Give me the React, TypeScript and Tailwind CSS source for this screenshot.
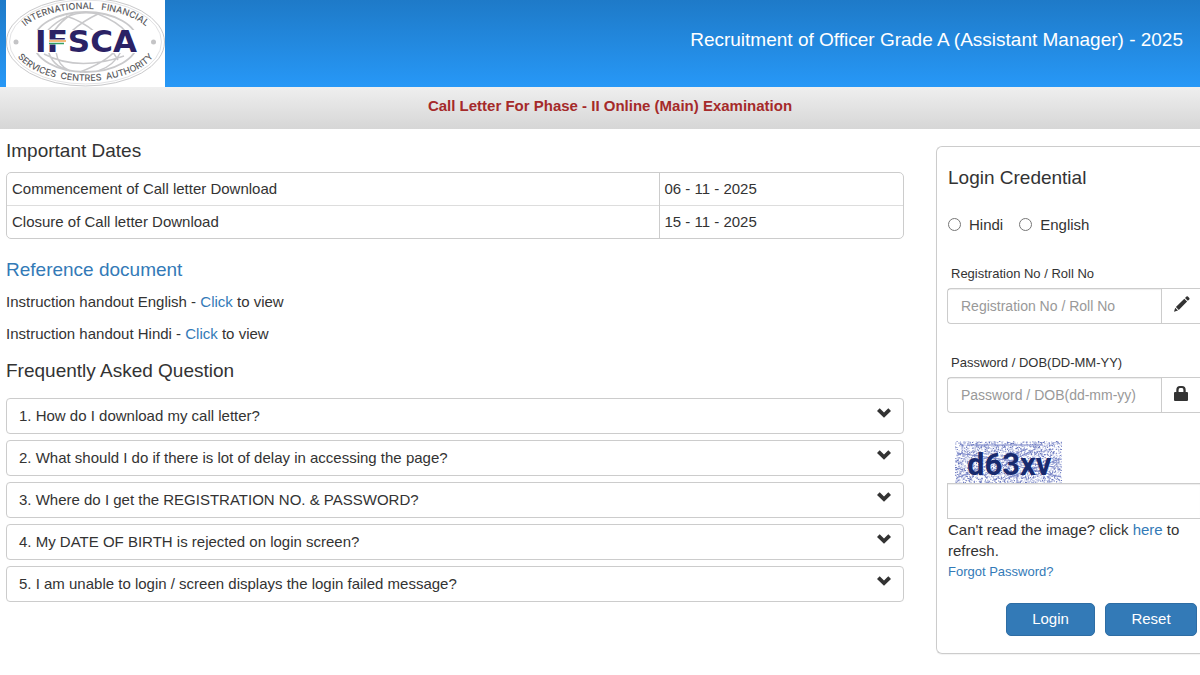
import { useState } from 'react';

const dates = [
  { label: 'Commencement of Call letter Download', date: '06 - 11 - 2025' },
  { label: 'Closure of Call letter Download', date: '15 - 11 - 2025' },
];

const questions = [
  '1. How do I download my call letter?',
  '2. What should I do if there is lot of delay in accessing the page?',
  '3. Where do I get the REGISTRATION NO. & PASSWORD?',
  '4. My DATE OF BIRTH is rejected on login screen?',
  '5. I am unable to login / screen displays the login failed message?',
];

const linkClass = 'text-[#337ab7] hover:underline';

function Logo() {
  return (
    <svg viewBox="0 0 159 87" className="ml-[6px] block h-[87px] w-[159px] bg-white" role="img" aria-label="IFSCA">
      <defs>
        <path id="ring-top" d="M 11 42 A 68.500 33 0 0 1 148 42" />
        <path id="ring-bottom" d="M 6 42 A 73.500 39 0 0 0 153 42" />
      </defs>
      <g fill="none" stroke="#c9c9cb">
        <ellipse cx="79.500" cy="42" rx="79" ry="44" strokeWidth="1" />
        <ellipse cx="79.500" cy="42" rx="76" ry="42" strokeWidth="1" stroke="#e2e2e4" />
        <ellipse cx="79.500" cy="42" rx="52" ry="30" strokeWidth="1.800" />
        <path d="M42 30 Q64 8 92 14 Q112 22 120 32 M66 14 Q44 28 42 50 Q46 66 62 70 M60 16 Q92 26 112 60 M92 14 Q62 28 50 52 Q52 66 64 71 M116 50 Q108 66 92 71 M38 54 Q72 72 118 56 M110 50 Q100 62 74 72" strokeWidth="1.500" />
      </g>
      <rect x="14" y="30" width="131" height="23" fill="#fff" />
      <circle cx="10" cy="42" r="2.500" fill="#c4c4c6" />
      <circle cx="147.500" cy="42" r="2.500" fill="#c4c4c6" />
      <text x="80" y="52" textAnchor="middle" fill="#2b2265" className="font-['DejaVu_Sans'] text-[31px] font-bold">IFSCA</text>
      <path d="M43 42 h17" stroke="#fff" strokeWidth="5" />
      <path d="M43 41 h17" stroke="#f0a04b" strokeWidth="1.500" />
      <path d="M43 43.500 h15" stroke="#35a065" strokeWidth="1.500" />
      <g fill="#5b5b60" textAnchor="middle" className="font-['Inter'] font-medium">
        <text className="text-[9px]"><textPath href="#ring-top" startOffset="50%">INTERNATIONAL{'\u00a0\u00a0'} FINANCIAL</textPath></text>
        <text className="text-[9px]"><textPath href="#ring-bottom" startOffset="50%">SERVICES{'\u00a0'} CENTRES{'\u00a0'} AUTHORITY</textPath></text>
      </g>
    </svg>
  );
}

// small seeded generator so the speckle stays the same between renders
function speckle(count: number, seed: number) {
  let s = seed;
  const next = () => {
    s = (s * 16807) % 2147483647;
    return s / 2147483647;
  };
  let d = '';
  for (let i = 0; i < count; i++) {
    const x = (next() * 106).toFixed(1);
    const y = (next() * 42).toFixed(1);
    d += `M${x} ${y}h1v1h-1z`;
  }
  return d;
}

const darkDots = speckle(1100, 77);
const lightDots = speckle(1300, 4021);

function Captcha() {
  return (
    <svg viewBox="0 0 107 42" className="ml-2 block h-[42px] w-[107px]" role="img" aria-label="Captcha image">
      <path d={lightDots} fill="#bcc3e6" />
      <path d={darkDots} fill="#6876bd" />
      <path d="M12 4 H88 M2 12 L100 26 M4 36 L72 8 M62 10 V42 M50 38 L105 18 M80 8 L30 34 M58 24 L106 36" stroke="#7a86c8" strokeWidth="1" fill="none" />
      <text x="12" y="34" fill="#182a6e" className="font-['Roboto'] text-[31px] font-bold">d63xv</text>
    </svg>
  );
}

function ChevronDown() {
  return (
    <svg viewBox="0 0 14 10" className="mb-1 h-[10px] w-[14px] shrink-0" aria-hidden="true">
      <path d="M0 3 L2.700 .3 L7 4.500 L11.300 .3 L14 3 L7 9.800 Z" fill="#333" />
    </svg>
  );
}

function Pencil() {
  return (
    <svg viewBox="0 0 16 16" className="h-4 w-4" aria-hidden="true">
      <path d="M0 15.800 L1.200 11.800 L4 14.600 Z M1.900 11 L10.300 2.700 L13.100 5.500 L4.800 13.900 Z M11 2 L12.500 .5 Q13.200 0 13.900 .6 L15.300 2 Q15.900 2.700 15.300 3.400 L13.800 4.800 Z" fill="#333" />
    </svg>
  );
}

function Padlock() {
  return (
    <svg viewBox="0 0 14 15" className="h-[15px] w-[14px]" aria-hidden="true">
      <path d="M0 7 Q0 6 1 6 H2.300 V4 Q2.300 0 6 0 H8 Q11.700 0 11.700 4 V6 H13 Q14 6 14 7 V14 Q14 15 13 15 H1 Q0 15 0 14 Z M4.600 6 H9.400 V4 Q9.400 2 8 2 H6 Q4.600 2 4.600 4 Z" fill="#333" fillRule="evenodd" />
    </svg>
  );
}

const inputClass =
  'min-w-0 flex-1 px-[13px] text-sm text-[#555] placeholder-[#999] shadow-[inset_0_1px_1px_rgba(0,0,0,0.075)] outline-none';

export default function App() {
  const [language, setLanguage] = useState('');
  const [open, setOpen] = useState(-1);

  return (
    <div className="min-h-screen overflow-hidden bg-white font-['Liberation_Sans',Arial,sans-serif] text-[15px] leading-[21px] text-[#333]">
      {/* Header */}
      <header className="flex items-start justify-between bg-linear-to-b from-[#1e7ac8] to-[#2798f7]">
        <Logo />
        <h1 className="pt-[27px] pr-[17px] text-[19px] leading-[26px] text-white">
          Recruitment of Officer Grade A (Assistant Manager) - 2025
        </h1>
      </header>
      <div className="h-[42px] bg-linear-to-b from-[#efefef] to-[#d6d6d6] pt-2 pl-5 text-center font-bold text-[#a52a2a]">
        Call Letter For Phase - II Online (Main) Examination
      </div>

      <div className="flex items-start">
        <main className="flex-1 pt-[10px] pr-8 pl-[6px]">
          <h2 className="text-[19px] leading-6">Important Dates</h2>
          <div className="mt-[9px] overflow-hidden rounded-[5px] border border-[#ccc]">
            <table className="w-full border-collapse leading-5">
              <tbody>
                {dates.map((d, i) => (
                  <tr key={d.label} className={i > 0 ? 'border-t border-[#ddd]' : ''}>
                    <td className="px-[5px] py-[6px]">{d.label}</td>
                    <td className="w-[244px] border-l border-[#ccc] px-[5px] py-[6px]">{d.date}</td>
                  </tr>
                ))}
              </tbody>
            </table>
          </div>

          <h2 className="mt-[19px] text-[19px] leading-6 text-[#337ab7]">Reference document</h2>
          <p className="mt-[9px]">
            Instruction handout English - <a href="#english" className={linkClass}>Click</a> to view
          </p>
          <p className="mt-[11px]">
            Instruction handout Hindi - <a href="#hindi" className={linkClass}>Click</a> to view
          </p>

          <h2 className="mt-[15px] text-[19px] leading-6">Frequently Asked Question</h2>
          <div className="mt-[15px] flex flex-col gap-[6px]">
            {questions.map((q, i) => (
              <button
                key={q}
                type="button"
                aria-expanded={open === i}
                onClick={() => setOpen(open === i ? -1 : i)}
                className="flex h-9 items-center justify-between rounded border border-[#ccc] px-3 pb-[2px] text-left"
              >
                {q}
                <ChevronDown />
              </button>
            ))}
          </div>
        </main>

        {/* Login */}
        <form
          onSubmit={(e) => e.preventDefault()}
          className="mt-[17px] w-[264px] rounded-l-md border border-r-0 border-[#ccc] pt-[19px] pb-[17px] pl-[10px] shadow-[0_1px_1px_rgba(0,0,0,0.05)]"
        >
          <h2 className="pl-px text-[19px] leading-6">Login Credential</h2>
          <div className="mt-6 flex gap-4 pl-px">
            {['Hindi', 'English'].map((name) => (
              <label key={name} className="flex items-center gap-2">
                <input
                  type="radio"
                  name="language"
                  checked={language === name}
                  onChange={() => setLanguage(name)}
                  className="h-[13px] w-[13px]"
                />
                {name}
              </label>
            ))}
          </div>

          <label htmlFor="regno" className="mt-[30px] block pl-1 text-[13px] leading-[18px]">Registration No / Roll No</label>
          <div className="mt-[5px] flex h-9 rounded-l border border-r-0 border-[#ccc]">
            <input id="regno" type="text" placeholder="Registration No / Roll No" className={inputClass} />
            <span className="flex w-[39px] items-center border-l border-[#ccc] pb-1 pl-3"><Pencil /></span>
          </div>

          <label htmlFor="dob" className="mt-[30px] block pl-1 text-[13px] leading-[18px]">Password / DOB(DD-MM-YY)</label>
          <div className="mt-[5px] flex h-9 rounded-l border border-r-0 border-[#ccc]">
            <input id="dob" type="password" placeholder="Password / DOB(dd-mm-yy)" className={inputClass} />
            <span className="flex w-[39px] items-center border-l border-[#ccc] pb-1 pl-3"><Padlock /></span>
          </div>

          <div className="mt-7">
            <Captcha />
            <input
              type="text"
              aria-label="Captcha text"
              className="block h-9 w-full border border-r-0 border-[#ccc] px-3 shadow-[inset_0_1px_1px_rgba(0,0,0,0.075)] outline-none"
            />
          </div>
          <p className="pl-px">
            Can't read the image? click <a href="#refresh" className={linkClass}>here</a> to refresh.
          </p>
          <a href="#forgot" className={`${linkClass} block pl-px text-[13px]`}>Forgot Password?</a>

          <div className="mt-[21px] flex justify-end gap-[10px] pr-[3px] text-white">
            <button type="submit" className="h-[33px] w-[89px] rounded-[5px] border border-[#2e6da4] bg-[#337ab7] pb-[2px]">Login</button>
            <button type="reset" onClick={() => setLanguage('')} className="h-[33px] w-[92px] rounded-[5px] border border-[#2e6da4] bg-[#337ab7] pb-[2px]">Reset</button>
          </div>
        </form>
      </div>
    </div>
  );
}
